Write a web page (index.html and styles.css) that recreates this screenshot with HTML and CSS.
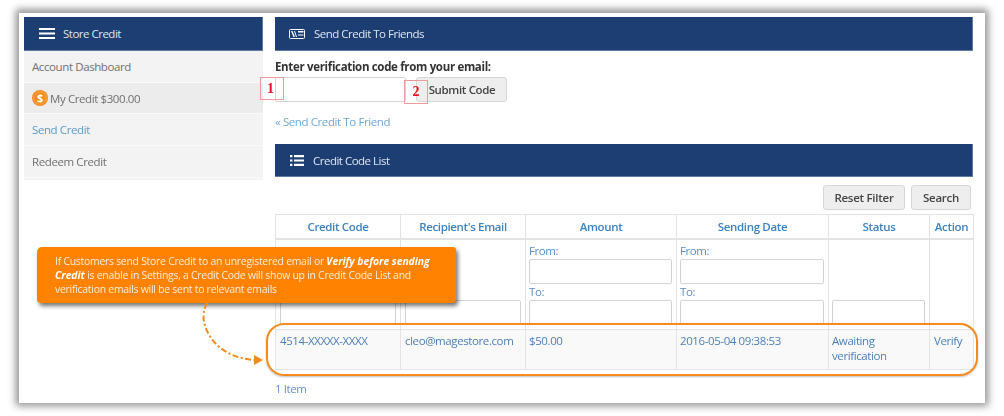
FILE: index.html
```html
<!DOCTYPE html>
<html lang="en">
<head>
<meta charset="utf-8">
<title>Store Credit</title>
<link rel="stylesheet" href="styles.css">
</head>
<body>
<div class="page">
  <div class="frame">
    <aside class="sidebar">
      <div class="bar bar-side">
        <svg class="icon" width="16" height="11" viewBox="0 0 16 11"><path fill="#fff" d="M0 0h16v2H0zM0 4.500h16v2H0zM0 9h16v2H0z"/></svg>
        <span>Store Credit</span>
      </div>
      <nav class="menu">
        <a class="item">Account Dashboard</a>
        <a class="item item-active"><svg class="coin" width="16" height="16" viewBox="0 0 16 16"><circle cx="8" cy="8" r="8" fill="#f58a1f"/><circle cx="8" cy="8" r="6.200" fill="none" stroke="#ffb566" stroke-width=".7"/><text x="8" y="12" text-anchor="middle" class="coin-s">$</text></svg>My Credit $300.00</a>
        <a class="item item-link">Send Credit</a>
        <a class="item">Redeem Credit</a>
      </nav>
    </aside>
    <main class="content">
      <div class="bar">
        <svg class="icon" width="16" height="10" viewBox="0 0 16 10"><rect x=".5" y=".5" width="15" height="9" rx="1" fill="none" stroke="#fff"/><path fill="#fff" d="M9 2h5.500v1.500H9zM9 5.500h5.500v1H9zM2 2h1.500L6 8H4.500zM5 2h1l2 6H7z"/></svg>
        <span>Send Credit To Friends</span>
      </div>
      <form class="verify">
        <label class="verify-label">Enter verification code from your email:</label>
        <div class="verify-row">
          <input class="field field-code" type="text">
          <button class="btn btn-submit" type="button">Submit Code</button>
        </div>
        <a class="back">« Send Credit To Friend</a>
      </form>
      <div class="bar bar-list">
        <svg class="icon" width="14" height="11" viewBox="0 0 14 11"><path fill="#fff" d="M0 0h2.400v2.200H0zM4 0h10v2.200H4zM0 4.400h2.400v2.200H0zM4 4.400h10v2.200H4zM0 8.800h2.400V11H0zM4 8.800h10V11H4z"/></svg>
        <span>Credit Code List</span>
      </div>
      <div class="actions">
        <button class="btn btn-reset" type="button">Reset Filter</button>
        <button class="btn btn-search" type="button">Search</button>
      </div>
      <table class="grid">
        <colgroup>
          <col class="c1"><col class="c2"><col class="c3"><col class="c4"><col class="c5"><col class="c6">
        </colgroup>
        <thead>
          <tr class="head">
            <th>Credit Code</th><th>Recipient's Email</th><th>Amount</th><th>Sending Date</th><th>Status</th><th>Action</th>
          </tr>
          <tr class="filters">
            <td><input class="field field-f" type="text"></td>
            <td><input class="field field-f" type="text"></td>
            <td class="tight"><label class="f-label">From:</label><input class="field field-f" type="text"><label class="f-label">To:</label><input class="field field-f" type="text"></td>
            <td class="tight"><label class="f-label">From:</label><input class="field field-f" type="text"><label class="f-label">To:</label><input class="field field-f" type="text"></td>
            <td class="tight"><input class="field field-f" type="text"></td>
            <td></td>
          </tr>
        </thead>
        <tbody>
          <tr class="row">
            <td>4514-XXXXX-XXXX</td><td>cleo@magestore.com</td><td class="tight">$50.00</td><td class="tight">2016-05-04 09:38:53</td><td class="tight">Awaiting verification</td><td>Verify</td>
          </tr>
        </tbody>
      </table>
      <div class="count">1 Item</div>
    </main>
  </div>

  <div class="mark mark-1">1</div>
  <div class="mark mark-2">2</div>
  <div class="oval"></div>
  <div class="callout">If Customers send Store Credit to an unregistered email or <b>Verify before sending</b><br><b>Credit</b> is enable in Settings, a Credit Code will show up in Credit Code List and<br>verification emails will be sent to relevant emails</div>
  <svg class="arrow" width="70" height="70" viewBox="0 0 70 70">
    <path d="M8 1C2 12 4 24 12 36C22 50 38 57 56 58" fill="none" stroke="#f58a1f" stroke-width="2" stroke-dasharray="6 2.500 2 2.500"/>
    <path d="M55 53l9 5-9 5z" fill="#f58a1f"/>
  </svg>
</div>
</body>
</html>
```
FILE: styles.css
```css
* { box-sizing: border-box; }
html, body { margin: 0; background: #fff; }
body { font-family: "Open Sans", "Liberation Sans", sans-serif; font-size: 11.5px; letter-spacing: -0.4px; color: #555; }
.page {
  position: relative;
  width: 1004px;
  height: 416px;
  padding: 13px 19px;
  overflow: hidden;
  filter: blur(0.4px);
}
.frame {
  width: 966px;
  height: 390px;
  background: #fff;
  padding: 4px 12px 0 5px;
  display: flex;
  gap: 12px;
  box-shadow: 0 0 8px 3px #999, 0 -2px 6px 2px #d8d8d8;
}
.sidebar { width: 239px; flex: none; }
.content { flex: 1; min-width: 0; }
.bar {
  height: 34px;
  background: #1c3e72;
  border: 1px solid #5f7aa3;
  border-width: 0 1px 1px 0;
  color: #dfe6f0;
  letter-spacing: -0.5px;
  display: flex;
  align-items: center;
  padding-left: 14px;
  gap: 9px;
}
.bar-side { padding-left: 15px; gap: 8px; }
.bar-list { padding-left: 15px; gap: 9px; height: 33px; }
.menu { display: flex; flex-direction: column; background: #f3f3f3; padding-bottom: 2px; }
.item {
  height: 32px;
  display: flex;
  align-items: center;
  padding-left: 8px;
  background: #f3f3f3;
  border-bottom: 1px solid #fafafa;
  color: #707070;
}
.item-active { background: #ececec; height: 31px; }
.item-link { color: #5b9bc9; }
.coin { margin-right: 2px; flex: none; }
.coin-s { font: 700 11px "Open Sans", sans-serif; fill: #fff; }
.verify { padding-top: 8px; }
.verify-label { display: block; height: 17px; line-height: 16px; font-weight: 700; letter-spacing: -0.33px; color: #333; }
.verify-row { display: flex; align-items: center; gap: 10px; height: 26px; }
.field { border: 1px solid #d4d4d4; border-radius: 2px; background: #fff; padding: 0; display: block; }
.field-code { width: 131px; height: 25px; }
.btn {
  font-family: inherit;
  font-size: 11.5px;
  font-weight: 600;
  letter-spacing: -0.27px;
  color: #444;
  background: #eee;
  border: 1px solid #d6d6d6;
  border-radius: 3px;
  height: 25px;
  padding: 0;
}
.btn-submit { width: 91px; letter-spacing: -0.35px; padding-left: 1px; }
.back { display: block; margin-top: 11px; height: 31px; line-height: 17px; color: #6fa8d6; }
.actions { display: flex; justify-content: flex-end; gap: 6px; padding: 8px 2px 4px 0; }
.btn-reset { width: 82px; }
.btn-search { width: 60px; }
.grid { width: 698px; table-layout: fixed; border-collapse: collapse; }
.c1 { width: 125px; } .c2 { width: 125px; } .c3 { width: 151px; }
.c4 { width: 152px; } .c5 { width: 101px; } .c6 { width: 44px; }
.grid th, .grid td { border: 1px solid #e3e3e3; padding: 0; }
.head th { height: 24px; border-bottom-width: 2px; font-weight: 600; letter-spacing: -0.35px; color: #3f82c0; text-align: center; }
.filters td { height: 89px; padding: 3px 4px 4px; vertical-align: bottom; }
.f-label { display: block; height: 16px; line-height: 16px; color: #5b8fc7; }
.field-f { width: 100%; height: 25px; border: 1px solid #d2d2d2; }
.row td { height: 40px; padding: 3px 4px; vertical-align: top; background: #f9f9f9; color: #4e80b9; line-height: 15px; }
.grid td.tight { padding-left: 3px; }
.count { margin-top: 11px; color: #6a93c8; }
.mark {
  position: absolute;
  width: 24px;
  height: 23px;
  border: 1px solid #ee9a9d;
  color: #e8101c;
  font: 700 14px/21px "Liberation Serif", serif;
  letter-spacing: 0;
  text-align: center;
}
.mark-1 { left: 260px; top: 77px; padding-right: 3px; }
.mark-2 { left: 404px; top: 80px; height: 24px; }
.oval {
  position: absolute;
  left: 266px;
  top: 323px;
  width: 712px;
  height: 53px;
  border: 2px solid #f58a1f;
  border-radius: 18px;
  box-shadow: 0 1px 2px rgba(0,0,0,.25);
}
.callout {
  position: absolute;
  left: 37px;
  top: 247px;
  width: 419px;
  height: 56px;
  padding: 7px 0 0 18px;
  background: #ff8200;
  border-radius: 5px 3px 4px 4px;
  box-shadow: 2px 3px 4px rgba(0,0,0,.55);
  color: #fbeedd;
  font-size: 10.4px;
  letter-spacing: -0.24px;
  line-height: 14px;
  white-space: nowrap;
}
.callout b { font-style: italic; font-weight: 700; color: #fff; letter-spacing: -0.05px; }
.arrow { position: absolute; left: 199px; top: 302px; }
```
